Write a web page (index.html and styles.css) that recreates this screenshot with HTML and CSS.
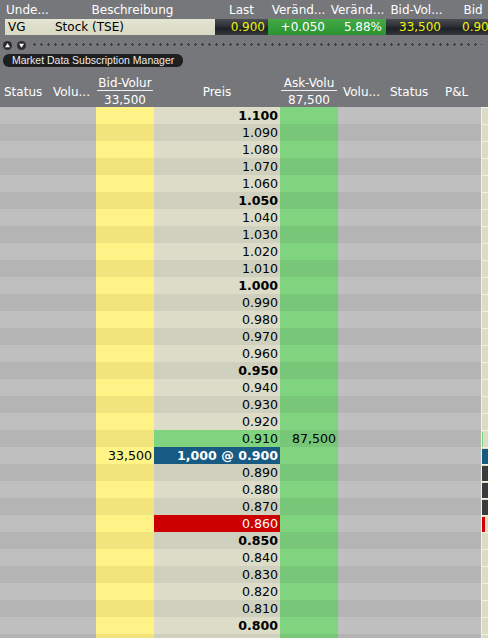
FILE: index.html
```html
<!DOCTYPE html>
<html lang="de">

<head>
    <meta charset="UTF-8">
    <title>BookTrader</title>
    <link rel="stylesheet" href="styles.css">
</head>

<body>
    <!-- quote line -->
    <div class="qhead">
        <span class="und">Unde...</span>
        <span>Beschreibung</span>
        <span>Last</span>
        <span>Veränd...</span>
        <span>Veränd...</span>
        <span>Bid-Vol...</span>
        <span>Bid</span>
    </div>
    <div class="qrow">
        <div class="desc"><span class="sym">VG</span><span>Stock (TSE)</span></div>
        <span class="dark">0.900</span>
        <span class="up">+0.050</span>
        <span class="up">5.88%</span>
        <span class="dark pad6">33,500</span>
        <span class="dark left">0.90</span>
    </div>
    <div class="tools">
        <span class="circ"><svg width="9" height="9" viewBox="0 0 9 9"><path d="M4.5 2.2 L7 6.2 L2 6.2 Z" fill="#fff"/></svg></span>
        <span class="circ"><svg width="9" height="9" viewBox="0 0 9 9"><path d="M2 2.8 L7 2.8 L4.5 6.8 Z" fill="#fff"/></svg></span>
        <span class="dots"></span>
    </div>
    <div class="pill">Market Data Subscription Manager</div>

    <!-- book -->
    <div class="bhead">
        <span class="lbl p4">Status</span>
        <span class="lbl p3">Volu...</span>
        <span class="two"><span class="t1">Bid-Volur</span><span class="t2">33,500</span></span>
        <span class="lbl mid">Preis</span>
        <span class="two"><span class="t1">Ask-Volu</span><span class="t2">87,500</span></span>
        <span class="lbl p5">Volu...</span>
        <span class="lbl p4">Status</span>
        <span class="lbl p4">P&amp;L</span>
        <span></span>
    </div>

    <div class="rows">
        <div class="row"><span class="g"></span><span class="bid"></span><span class="px b">1.100</span><span class="ask"></span><span class="g"></span><span class="mk"></span></div>
        <div class="row"><span class="g"></span><span class="bid"></span><span class="px">1.090</span><span class="ask"></span><span class="g"></span><span class="mk"></span></div>
        <div class="row"><span class="g"></span><span class="bid"></span><span class="px">1.080</span><span class="ask"></span><span class="g"></span><span class="mk"></span></div>
        <div class="row"><span class="g"></span><span class="bid"></span><span class="px">1.070</span><span class="ask"></span><span class="g"></span><span class="mk"></span></div>
        <div class="row"><span class="g"></span><span class="bid"></span><span class="px">1.060</span><span class="ask"></span><span class="g"></span><span class="mk"></span></div>
        <div class="row"><span class="g"></span><span class="bid"></span><span class="px b">1.050</span><span class="ask"></span><span class="g"></span><span class="mk"></span></div>
        <div class="row"><span class="g"></span><span class="bid"></span><span class="px">1.040</span><span class="ask"></span><span class="g"></span><span class="mk"></span></div>
        <div class="row"><span class="g"></span><span class="bid"></span><span class="px">1.030</span><span class="ask"></span><span class="g"></span><span class="mk"></span></div>
        <div class="row"><span class="g"></span><span class="bid"></span><span class="px">1.020</span><span class="ask"></span><span class="g"></span><span class="mk"></span></div>
        <div class="row"><span class="g"></span><span class="bid"></span><span class="px">1.010</span><span class="ask"></span><span class="g"></span><span class="mk"></span></div>
        <div class="row"><span class="g"></span><span class="bid"></span><span class="px b">1.000</span><span class="ask"></span><span class="g"></span><span class="mk"></span></div>
        <div class="row"><span class="g"></span><span class="bid"></span><span class="px">0.990</span><span class="ask"></span><span class="g"></span><span class="mk"></span></div>
        <div class="row"><span class="g"></span><span class="bid"></span><span class="px">0.980</span><span class="ask"></span><span class="g"></span><span class="mk"></span></div>
        <div class="row"><span class="g"></span><span class="bid"></span><span class="px">0.970</span><span class="ask"></span><span class="g"></span><span class="mk"></span></div>
        <div class="row"><span class="g"></span><span class="bid"></span><span class="px">0.960</span><span class="ask"></span><span class="g"></span><span class="mk"></span></div>
        <div class="row"><span class="g"></span><span class="bid"></span><span class="px b">0.950</span><span class="ask"></span><span class="g"></span><span class="mk"></span></div>
        <div class="row"><span class="g"></span><span class="bid"></span><span class="px">0.940</span><span class="ask"></span><span class="g"></span><span class="mk"></span></div>
        <div class="row"><span class="g"></span><span class="bid"></span><span class="px">0.930</span><span class="ask"></span><span class="g"></span><span class="mk"></span></div>
        <div class="row"><span class="g"></span><span class="bid"></span><span class="px">0.920</span><span class="ask"></span><span class="g"></span><span class="mk"></span></div>
        <div class="row"><span class="g"></span><span class="bid"></span><span class="px last">0.910</span><span class="ask">87,500</span><span class="g"></span><span class="mk"><i class="m-green"></i></span></div>
        <div class="row"><span class="g"></span><span class="bid">33,500</span><span class="px b own">1,000 @ 0.900</span><span class="ask"></span><span class="g"></span><span class="mk"><i class="m-blue"></i></span></div>
        <div class="row"><span class="g"></span><span class="bid"></span><span class="px">0.890</span><span class="ask"></span><span class="g"></span><span class="mk"><i class="m-dark"></i></span></div>
        <div class="row"><span class="g"></span><span class="bid"></span><span class="px">0.880</span><span class="ask"></span><span class="g"></span><span class="mk"><i class="m-dark"></i></span></div>
        <div class="row"><span class="g"></span><span class="bid"></span><span class="px">0.870</span><span class="ask"></span><span class="g"></span><span class="mk"><i class="m-dark"></i></span></div>
        <div class="row"><span class="g"></span><span class="bid"></span><span class="px red">0.860</span><span class="ask"></span><span class="g"></span><span class="mk"><i class="m-red"></i></span></div>
        <div class="row"><span class="g"></span><span class="bid"></span><span class="px b">0.850</span><span class="ask"></span><span class="g"></span><span class="mk"></span></div>
        <div class="row"><span class="g"></span><span class="bid"></span><span class="px">0.840</span><span class="ask"></span><span class="g"></span><span class="mk"></span></div>
        <div class="row"><span class="g"></span><span class="bid"></span><span class="px">0.830</span><span class="ask"></span><span class="g"></span><span class="mk"></span></div>
        <div class="row"><span class="g"></span><span class="bid"></span><span class="px">0.820</span><span class="ask"></span><span class="g"></span><span class="mk"></span></div>
        <div class="row"><span class="g"></span><span class="bid"></span><span class="px">0.810</span><span class="ask"></span><span class="g"></span><span class="mk"></span></div>
        <div class="row"><span class="g"></span><span class="bid"></span><span class="px b">0.800</span><span class="ask"></span><span class="g"></span><span class="mk"></span></div>
        <div class="row"><span class="g"></span><span class="bid"></span><span class="px"></span><span class="ask"></span><span class="g"></span><span class="mk"></span></div>
    </div>
</body>

</html>
```

FILE: styles.css
```css
* {
    padding: 0;
    margin: 0;
    box-sizing: border-box;
}

body {
    width: 488px;
    height: 638px;
    overflow: hidden;
    background: #76777b;
    color: #fff;
    font-family: "DejaVu Sans", Verdana, sans-serif;
    font-size: 12px;
    white-space: nowrap;
}

/* quote line */
.qhead,
.qrow {
    display: grid;
    grid-template-columns: 45px 165px 53px 61px 57px 61px 52px;
    padding-left: 5px;
}

.qhead {
    height: 19px;
    padding-top: 3px;
    line-height: 14px;
}

.qhead span {
    text-align: center;
    overflow: hidden;
}

.qhead .und {
    text-align: left;
    padding-left: 1px;
}

.qrow {
    height: 16px;
    line-height: 16px;
}

.qrow .desc {
    grid-column: span 2;
    display: flex;
    color: #000;
    background: linear-gradient(#e4e5d2, #d8d9c2);
}

.qrow .sym {
    width: 50px;
    padding-left: 3px;
}

.qrow .dark,
.qrow .up {
    text-align: right;
    padding-right: 3px;
}

.qrow .dark {
    color: #eef20c;
    background: linear-gradient(#4a4e53 0%, #30343a 40%, #1d2024 60%, #34383d 100%);
}

.qrow .up {
    padding-right: 4px;
    background: linear-gradient(#46a946 0%, #35a03c 50%, #2b9232 100%);
}

.qrow .pad6 {
    padding-right: 6px;
}

.qrow .left {
    text-align: left;
    padding-left: 15px;
}

.tools {
    height: 19px;
    display: flex;
    align-items: flex-start;
    padding: 6px 0 0 3px;
}

.circ {
    width: 9px;
    height: 9px;
    border-radius: 50%;
    background: #2c2c2c;
    margin-right: 5px;
    display: flex;
}

.dots {
    flex: 1;
    height: 3px;
    margin: 2px 6px 0 0;
    background-image: radial-gradient(circle, #3a3a3a 1px, transparent 1.2px);
    background-size: 7px 3px;
    background-position: 0 0;
}

.pill {
    width: 180px;
    height: 13px;
    margin-left: 3px;
    padding-left: 9px;
    border-radius: 6px;
    background: #1f1f1f;
    color: #ececec;
    font-family: "Liberation Sans", Arial, sans-serif;
    font-size: 10.5px;
    line-height: 13px;
}

/* book header */
.bhead {
    margin-top: 4px;
    height: 36px;
    display: grid;
    grid-template-columns: 50px 46px 58px 126px 58px 48px 55px 40px 7px;
    line-height: 14px;
}

.lbl {
    padding-top: 14px;
}

.p3 {
    padding-left: 3px;
}

.p4 {
    padding-left: 4px;
}

.p5 {
    padding-left: 5px;
}

.mid {
    text-align: center;
}

.two {
    display: flex;
    flex-direction: column;
    align-items: center;
    padding-top: 5px;
}

.two .t1 {
    width: 56px;
    text-align: center;
    border-bottom: 1px solid #f0f0f0;
}

.two .t2 {
    padding-top: 2px;
}

/* book rows */
.row {
    display: grid;
    grid-template-columns: 96px 58px 126px 58px 143px 7px;
    height: 17px;
    line-height: 17px;
    color: #000;
    font-size: 12.6px;
}

.row span {
    text-align: right;
    padding-right: 2px;
    overflow: hidden;
}

.g {
    background: #bfbfbf;
}

.bid {
    background: #fff387;
}

.px {
    background: #dcdcc8;
}

.ask {
    background: #80d47f;
}

.row:nth-child(even) .g {
    background: #b4b4b4;
}

.row:nth-child(even) .bid {
    background: #f2e47d;
}

.row:nth-child(even) .px {
    background: #d0d0be;
}

.row:nth-child(even) .ask {
    background: #78c677;
}

.b {
    font-weight: bold;
}

.row .px.last {
    background: #80d47f;
}

.row .px.own {
    background: #175a82;
    color: #fff;
}

.row .px.red {
    background: #cc0000;
    color: #fff;
}

.row .mk {
    padding: 0;
    background: #dcdcc6;
    border-left: 1px solid #f2f2de;
    border-top: 1px solid #f2f2de;
    display: flex;
    align-items: center;
}

.mk i {
    display: block;
    height: 15px;
}

.m-green {
    width: 1px;
    background: #78d878;
}

.m-blue {
    width: 6px;
    background: #175a82;
}

.m-dark {
    width: 6px;
    background: #3b3b3b;
}

.m-red {
    width: 3px;
    background: #d00000;
}
```
